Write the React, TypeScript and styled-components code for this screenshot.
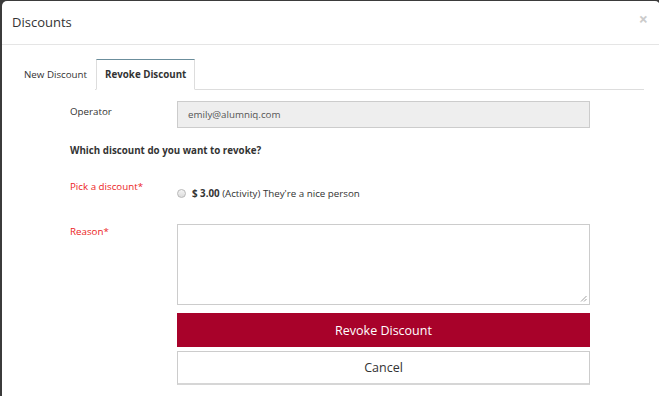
import React from "react";
import styled, { createGlobalStyle } from "styled-components";

const Global = createGlobalStyle`
  html, body { margin: 0; padding: 0; background: #3b3b3b; height: 100%; overflow: hidden; }
  body { font-family: "Open Sans", "Liberation Sans", sans-serif; color: #333; }
  * { box-sizing: border-box; }
`;

const Modal = styled.div`
  margin: 1px 0 0 2px;
  width: 658px;
  height: 420px;
  background: #fff;
  border-radius: 5px 5px 0 0;
`;

const Header = styled.div`
  height: 44px;
  border-bottom: 1px solid #e5e5e5;
  display: flex;
  align-items: center;
  justify-content: space-between;
  padding: 0 12px 2px 10px;
`;

const Title = styled.h4`
  margin: 0;
  font-size: 13px;
  font-weight: 400;
  color: #333;
`;

const Close = styled.span`
  font-size: 16px;
  font-weight: 700;
  color: #cbcbcb;
  line-height: 1;
  margin-top: -6px;
`;

const Body = styled.div`
  padding: 14px 16px 0 14px;
`;

const TabNav = styled.div`
  display: flex;
  align-items: flex-end;
  height: 31px;
  border-bottom: 1px solid #ddd;
`;

const Tab = styled.div<{ $active?: boolean }>`
  height: 31px;
  margin-bottom: -1px;
  padding: 0 ${(p) => (p.$active ? 8 : 7)}px;
  display: flex;
  align-items: center;
  font-size: 9.75px;
  font-weight: ${(p) => (p.$active ? 700 : 400)};
  color: #333;
  margin-right: 1px;
  background: #fff;
  border: 1px solid ${(p) => (p.$active ? "#ddd" : "transparent")};
  border-top: 1px solid ${(p) => (p.$active ? "#6b8e9c" : "transparent")};
  border-bottom-color: ${(p) => (p.$active ? "#fff" : "transparent")};
`;

const Form = styled.div`
  padding: 11px 0 0 54px;
  display: flex;
  flex-direction: column;
`;

const Row = styled.div<{ $mt?: number }>`
  display: flex;
  align-items: flex-start;
  margin-top: ${(p) => p.$mt ?? 0}px;
`;

const Label = styled.div<{ $required?: boolean; $pt?: number }>`
  width: 107px;
  flex: none;
  font-size: 9.75px;
  padding-top: ${(p) => p.$pt ?? 0}px;
  color: ${(p) => (p.$required ? "#ec1c24" : "#333")};
`;

const Control = styled.div`
  width: 413px;
  display: flex;
  flex-direction: column;
`;

const ReadOnlyInput = styled.div`
  height: 27px;
  background: #eee;
  border: 1px solid #ccc;
  padding: 0 10px;
  display: flex;
  align-items: center;
  font-size: 9.75px;
  color: #555;
`;

const Question = styled.div`
  font-size: 9.75px;
  font-weight: 700;
  color: #333;
`;

const RadioLine = styled.label`
  display: flex;
  align-items: center;
  gap: 6px;
  font-size: 9.75px;
  color: #333;
  padding-top: 7px;
  b { font-weight: 700; }
`;

const Radio = styled.span`
  width: 9px;
  height: 9px;
  border-radius: 50%;
  border: 1px solid #b8b8b8;
  background: linear-gradient(#f4f4f4, #dcdcdc);
  flex: none;
`;

const TextArea = styled.div`
  height: 81px;
  border: 1px solid #ccc;
  position: relative;
  background: #fff;
`;

const Grip = styled.svg`
  position: absolute;
  right: 2px;
  bottom: 2px;
`;

const Button = styled.div<{ $primary?: boolean; $mt?: number }>`
  height: 34px;
  margin-top: ${(p) => p.$mt ?? 0}px;
  display: flex;
  align-items: center;
  justify-content: center;
  font-size: 12.5px;
  color: ${(p) => (p.$primary ? "#fff" : "#333")};
  background: ${(p) => (p.$primary ? "#a8022a" : "#fff")};
  border: 1px solid ${(p) => (p.$primary ? "#a8022a" : "#ccc")};
  border-bottom: ${(p) => (p.$primary ? "1px solid #a8022a" : "2px solid #d6d6d6")};
`;

export default function App() {
  return (
    <>
      <Global />
      <Modal>
        <Header>
          <Title>Discounts</Title>
          <Close>×</Close>
        </Header>
        <Body>
          <TabNav>
            <Tab>New Discount</Tab>
            <Tab $active>Revoke Discount</Tab>
          </TabNav>
          <Form>
            <Row>
              <Label $pt={4}>Operator</Label>
              <Control>
                <ReadOnlyInput>emily@alumniq.com</ReadOnlyInput>
              </Control>
            </Row>
            <Row $mt={16}>
              <Question>Which discount do you want to revoke?</Question>
            </Row>
            <Row $mt={23}>
              <Label $required>Pick a discount*</Label>
              <Control>
                <RadioLine>
                  <Radio />
                  <span>
                    <b>$ 3.00</b> (Activity) They're a nice person
                  </span>
                </RadioLine>
              </Control>
            </Row>
            <Row $mt={24}>
              <Label $required $pt={1}>Reason*</Label>
              <Control>
                <TextArea>
                  <Grip width="7" height="7" viewBox="0 0 7 7">
                    <path d="M1 6.5 L6.5 1 M4 6.5 L6.5 4" stroke="#888" strokeWidth="0.8" />
                  </Grip>
                </TextArea>
                <Button $primary $mt={8}>Revoke Discount</Button>
                <Button $mt={4}>Cancel</Button>
              </Control>
            </Row>
          </Form>
        </Body>
      </Modal>
    </>
  );
}
